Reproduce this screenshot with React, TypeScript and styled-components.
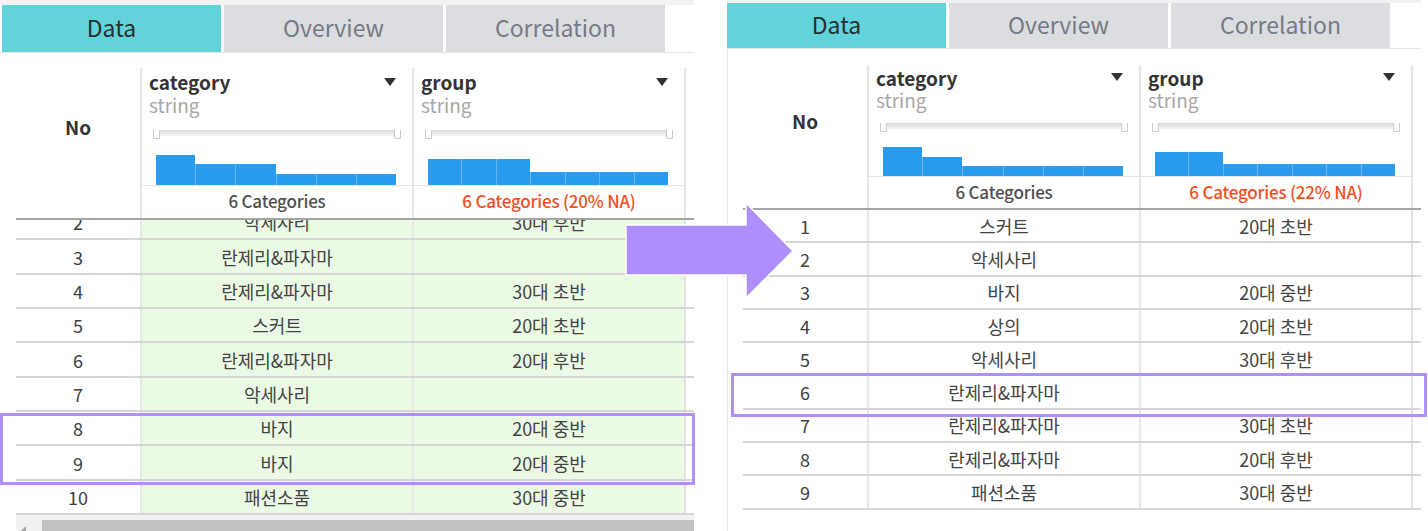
import React, { useLayoutEffect, useRef } from "react";
import styled, { createGlobalStyle, ThemeProvider } from "styled-components";

interface Metrics {
  stripH: number;
  tabH: number;
  tabPad: number;
  bodyPad: number;
  tableGap: number;
  padTop: number;
  lineH: number;
  sliderGap: number;
  chartH: number;
  summaryH: number;
  rowH: number;
  bordered: boolean;
  tinted: boolean;
}

interface Column {
  name: string;
  type: string;
  bars: number[];
  summary: string;
  warn?: boolean;
}

const leftMetrics: Metrics = {
  stripH: 5,
  tabH: 47,
  tabPad: 2,
  bodyPad: 16,
  tableGap: 15,
  padTop: 2,
  lineH: 23,
  sliderGap: 14,
  chartH: 46,
  summaryH: 33,
  rowH: 34.35,
  bordered: false,
  tinted: true
};

const rightMetrics: Metrics = {
  stripH: 3,
  tabH: 45,
  tabPad: 0,
  bodyPad: 15,
  tableGap: 16,
  padTop: 1,
  lineH: 22,
  sliderGap: 13,
  chartH: 44,
  summaryH: 32,
  rowH: 33.3,
  bordered: true,
  tinted: false
};

const GlobalStyle = createGlobalStyle`
  body {
    margin: 0;
    background: #fff;
    font-family: "Noto Sans CJK KR", "Noto Sans", sans-serif;
    line-height: 1.2;
  }
`;

const Page = styled.div`
  position: relative;
  display: flex;
  width: 1428px;
  height: 531px;
  overflow: hidden;
  background: #fff;
`;

const Panel = styled.section<{ $offset: number }>`
  display: flex;
  flex-direction: column;
  width: 694px;
  height: 531px;
  margin-left: ${({ $offset }) => $offset}px;
  flex-shrink: 0;
`;

const TopStrip = styled.div`
  height: ${({ theme }) => theme.stripH}px;
  background: #f2f2f2;
`;

const TabRow = styled.div`
  display: flex;
  gap: 3px;
  padding-left: ${({ theme }) => theme.tabPad}px;
  border-bottom: 1px solid #e6e6e6;
`;

const Tab = styled.div<{ $active?: boolean }>`
  width: 219px;
  height: ${({ theme }) => theme.tabH}px;
  display: flex;
  align-items: center;
  justify-content: center;
  font-size: 23px;
  line-height: 1;
  padding-bottom: 2px;
  box-sizing: border-box;
  background: ${({ $active }) => ($active ? "#63d3db" : "#dcdde1")};
  color: ${({ $active }) => ($active ? "#26302f" : "#757a84")};
`;

const Body = styled.div`
  flex: 1;
  min-height: 0;
  display: flex;
  flex-direction: column;
  padding: ${({ theme }) => theme.tableGap}px 0 0 ${({ theme }) => theme.bodyPad}px;
  border-left: ${({ theme }) => (theme.bordered ? "1px solid #e9e9e9" : "none")};
`;

const Header = styled.div`
  display: flex;
  border-bottom: 2px solid #a4a4a4;
`;

const NoHead = styled.div`
  width: 124px;
  display: flex;
  flex-direction: column;
`;

const NoLabel = styled.div`
  flex: 1;
  display: flex;
  align-items: center;
  justify-content: center;
  font-size: 19px;
  font-weight: 700;
  line-height: 1;
  color: #333;
`;

const NoSpacer = styled.div`
  height: ${({ theme }) => theme.summaryH + 1}px;
`;

const ColHead = styled.div`
  width: 272px;
  box-sizing: border-box;
  display: flex;
  flex-direction: column;
  padding-top: ${({ theme }) => theme.padTop}px;
  border-left: 2px solid #e6e6e6;
`;

const HeadGutter = styled.div`
  flex: 1;
  border-left: 2px solid #e6e6e6;
`;

const TitleRow = styled.div`
  display: flex;
  align-items: center;
  justify-content: space-between;
  height: ${({ theme }) => theme.lineH}px;
  line-height: 1;
  padding: 0 16px 0 7px;
  font-size: 19px;
  font-weight: 700;
  color: #333;
`;

const Caret = styled.span`
  width: 0;
  height: 0;
  border-left: 6px solid transparent;
  border-right: 6px solid transparent;
  border-top: 8px solid #333;
`;

const TypeLabel = styled.div`
  display: flex;
  align-items: center;
  height: ${({ theme }) => theme.lineH}px;
  line-height: 1;
  padding-left: 7px;
  font-size: 19px;
  color: #a6a6a6;
`;

const Slider = styled.div`
  display: flex;
  height: 9px;
  margin: ${({ theme }) => theme.sliderGap}px 11px 0 11px;
`;

const Handle = styled.span`
  width: 5px;
  height: 8px;
  background: #fff;
  border: 1px solid #cbcbcb;
  border-top: none;
  border-radius: 0 0 2px 2px;
`;

const Track = styled.span`
  flex: 1;
  height: 6px;
  background: linear-gradient(#dcdcdc, #f4f4f4);
`;

const Chart = styled.div`
  display: flex;
  align-items: flex-end;
  height: ${({ theme }) => theme.chartH}px;
  margin: 0 16px 0 14px;
`;

const Bar = styled.span<{ $h: number }>`
  flex: 1;
  height: ${({ $h }) => $h}px;
  background: #2a9cf0;
  & + & {
    border-left: 1px solid #66b8f4;
  }
`;

const Summary = styled.div<{ $warn?: boolean }>`
  height: ${({ theme }) => theme.summaryH}px;
  display: flex;
  align-items: center;
  justify-content: center;
  padding-bottom: 3px;
  box-sizing: border-box;
  border-top: 1px solid #e4e4e4;
  font-size: 17px;
  font-weight: 500;
  line-height: 1;
  letter-spacing: -0.2px;
  color: ${({ $warn }) => ($warn ? "#f04f22" : "#4f4f4f")};
`;

const Viewport = styled.div`
  flex: 1;
  min-height: 0;
  overflow: hidden;
`;

const Row = styled.div`
  display: flex;
  height: ${({ theme }) => theme.rowH}px;
  box-sizing: border-box;
  border-bottom: 2px solid #d6d6d6;
`;

const NoCell = styled.div`
  width: 124px;
  display: flex;
  align-items: center;
  justify-content: center;
  font-size: 18px;
  line-height: 1;
  color: #404040;
`;

const DataCell = styled.div`
  width: 272px;
  box-sizing: border-box;
  display: flex;
  align-items: center;
  justify-content: center;
  border-left: 2px solid #e8e8e8;
  background: ${({ theme }) => (theme.tinted ? "#ebfae4" : "#fff")};
  font-size: 18px;
  line-height: 1;
  color: #444;
`;

const RowGutter = styled.div`
  flex: 1;
  border-left: 2px solid #e3e3e3;
`;

const Scrollbar = styled.div`
  display: flex;
  height: 16px;
  box-sizing: border-box;
  padding-top: 5px;
  background: #f1f1f1;
`;

const ScrollArrow = styled.span`
  width: 26px;
  &::before {
    content: "";
    display: block;
    width: 0;
    height: 0;
    margin: 6px 0 0 5px;
    border-top: 5px solid transparent;
    border-bottom: 5px solid transparent;
    border-right: 5px solid #a5a5a5;
  }
`;

const Thumb = styled.span`
  flex: 1;
  background: #c1c1c1;
`;

const HighlightBox = styled.div<{ $x: number; $y: number; $w: number; $h: number }>`
  position: absolute;
  left: ${({ $x }) => $x}px;
  top: ${({ $y }) => $y}px;
  width: ${({ $w }) => $w}px;
  height: ${({ $h }) => $h}px;
  box-sizing: border-box;
  border: 3px solid #b08ffa;
  pointer-events: none;
`;

const ArrowMark = styled.svg`
  position: absolute;
  left: 625px;
  top: 202px;
`;

const tabs = ["Data", "Overview", "Correlation"];

const beforeColumns: Column[] = [
  {
    name: "category",
    type: "string",
    bars: [30, 21, 21, 11, 11, 11],
    summary: "6 Categories"
  },
  {
    name: "group",
    type: "string",
    bars: [26, 26, 26, 13, 13, 13, 13],
    summary: "6 Categories (20% NA)",
    warn: true
  }
];

const afterColumns: Column[] = [
  {
    name: "category",
    type: "string",
    bars: [29, 19, 10, 10, 10, 10],
    summary: "6 Categories"
  },
  {
    name: "group",
    type: "string",
    bars: [24, 24, 12, 12, 12, 12, 12],
    summary: "6 Categories (22% NA)",
    warn: true
  }
];

// the left grid is scrolled, so it starts at row 2
const beforeRows: [string, string][] = [
  ["악세사리", "30대 후반"],
  ["란제리&파자마", ""],
  ["란제리&파자마", "30대 초반"],
  ["스커트", "20대 초반"],
  ["란제리&파자마", "20대 후반"],
  ["악세사리", ""],
  ["바지", "20대 중반"],
  ["바지", "20대 중반"],
  ["패션소품", "30대 중반"]
];

const afterRows: [string, string][] = [
  ["스커트", "20대 초반"],
  ["악세사리", ""],
  ["바지", "20대 중반"],
  ["상의", "20대 초반"],
  ["악세사리", "30대 후반"],
  ["란제리&파자마", ""],
  ["란제리&파자마", "30대 초반"],
  ["란제리&파자마", "20대 후반"],
  ["패션소품", "30대 중반"]
];

interface TableProps {
  metrics: Metrics;
  columns: Column[];
  rows: [string, string][];
  offset: number;
  firstRow: number;
  scrolled?: number;
}

const DataTable = ({ metrics, columns, rows, offset, firstRow, scrolled }: TableProps) => {
  const viewRef = useRef<HTMLDivElement>(null);

  useLayoutEffect(() => {
    if (viewRef.current && scrolled) viewRef.current.scrollTop = scrolled;
  }, [scrolled]);

  return (
    <ThemeProvider theme={metrics}>
      <Panel $offset={offset}>
        <TopStrip />
        <TabRow>
          {tabs.map((t, i) => (
            <Tab key={t} $active={i === 0}>
              {t}
            </Tab>
          ))}
        </TabRow>
        <Body>
          <Header>
            <NoHead>
              <NoLabel>No</NoLabel>
              <NoSpacer />
            </NoHead>
            {columns.map(col => (
              <ColHead key={col.name}>
                <TitleRow>
                  {col.name}
                  <Caret />
                </TitleRow>
                <TypeLabel>{col.type}</TypeLabel>
                <Slider>
                  <Handle />
                  <Track />
                  <Handle />
                </Slider>
                <Chart>
                  {col.bars.map((h, i) => (
                    <Bar key={i} $h={h} />
                  ))}
                </Chart>
                <Summary $warn={col.warn}>{col.summary}</Summary>
              </ColHead>
            ))}
            <HeadGutter />
          </Header>
          <Viewport ref={viewRef}>
            {rows.map(([cat, grp], i) => (
              <Row key={i}>
                <NoCell>{i + firstRow}</NoCell>
                <DataCell>{cat}</DataCell>
                <DataCell>{grp}</DataCell>
                <RowGutter />
              </Row>
            ))}
          </Viewport>
          {scrolled ? (
            <Scrollbar>
              <ScrollArrow />
              <Thumb />
            </Scrollbar>
          ) : null}
        </Body>
      </Panel>
    </ThemeProvider>
  );
};

const App = () => {
  return (
    <>
      <GlobalStyle />
      <Page>
        <DataTable
          metrics={leftMetrics}
          columns={beforeColumns}
          rows={beforeRows}
          offset={0}
          firstRow={2}
          scrolled={14}
        />
        <DataTable
          metrics={rightMetrics}
          columns={afterColumns}
          rows={afterRows}
          offset={33}
          firstRow={1}
        />
        <HighlightBox $x={0} $y={413} $w={695} $h={72} />
        <HighlightBox $x={731} $y={373} $w={696} $h={44} />
        <ArrowMark width="170" height="98" viewBox="0 0 170 98">
          <polygon
            points="1,23 121,23 121,1 168,49 121,96 121,73 1,73"
            fill="#ae8efb"
            stroke="#fff"
            strokeWidth="1.5"
          />
        </ArrowMark>
      </Page>
    </>
  );
};

export default App;
